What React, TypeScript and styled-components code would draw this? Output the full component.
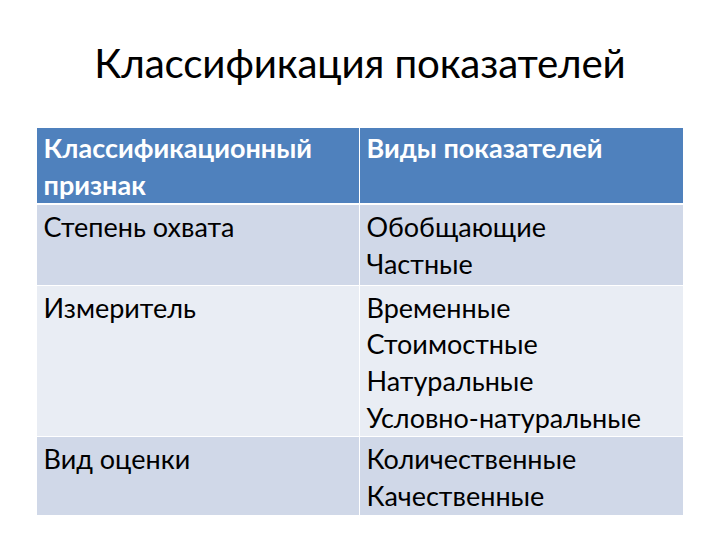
import React from 'react';
import styled, { createGlobalStyle } from 'styled-components';

const rows = [
    { sign: 'Степень охвата', kinds: ['Обобщающие', 'Частные'], height: 81 },
    { sign: 'Измеритель', kinds: ['Временные', 'Стоимостные', 'Натуральные', 'Условно-натуральные'], height: 151 },
    { sign: 'Вид оценки', kinds: ['Количественные', 'Качественные'], height: 78 },
];

const App = () => {
    return (
        <Slide>
            <GlobalStyle />
            <Title>Классификация показателей</Title>
            <Table>
                <thead>
                    <tr>
                        <HeadCell $width={323}>Классификационный признак</HeadCell>
                        <HeadCell>Виды показателей</HeadCell>
                    </tr>
                </thead>
                <tbody>
                    {rows.map((row, index) => (
                        <Row key={index} $odd={index % 2 === 0} $height={row.height}>
                            <Cell>{row.sign}</Cell>
                            <Cell>
                                {row.kinds.map((kind) => (
                                    <Line key={kind}>{kind}</Line>
                                ))}
                            </Cell>
                        </Row>
                    ))}
                </tbody>
            </Table>
        </Slide>
    );
};

export default App;

const GlobalStyle = createGlobalStyle`
    body {
        margin: 0;
        background: #fff;
        font-family: Lato, "Open Sans", sans-serif;
        color: #000;
    }
`;

const Slide = styled.div`
    width: 720px;
    height: 540px;
    display: flex;
    flex-direction: column;
    align-items: center;
    overflow: hidden;
`;

const Title = styled.h1`
    margin: 35px 0 0;
    height: 92px;
    font-size: 40.3px;
    font-weight: 400;
    line-height: 56px;
    letter-spacing: -0.15px;
    color: #000;
`;

const Table = styled.table`
    width: 648px;
    margin-left: -1px;
    border-collapse: collapse;
    table-layout: fixed;
`;

const HeadCell = styled.th<{ $width?: number }>`
    box-sizing: border-box;
    width: ${(p) => (p.$width ? `${p.$width}px` : 'auto')};
    height: 70px;
    padding: 2px 6px 0 7px;
    background: #4f81bd;
    color: #fff;
    font-size: 27px;
    font-weight: 700;
    line-height: 36.5px;
    text-align: left;
    vertical-align: top;
    border: 1px solid #fff;
    border-bottom-width: 2px;
`;

const Row = styled.tr<{ $odd: boolean; $height: number }>`
    height: ${(p) => p.$height}px;
    background: ${(p) => (p.$odd ? '#d0d8e8' : '#e9edf4')};
`;

const Cell = styled.td`
    padding: 4px 6px 0 7px;
    font-size: 27px;
    line-height: 36.7px;
    vertical-align: top;
    border: 1px solid #fff;
`;

const Line = styled.div`
    white-space: nowrap;
`;
